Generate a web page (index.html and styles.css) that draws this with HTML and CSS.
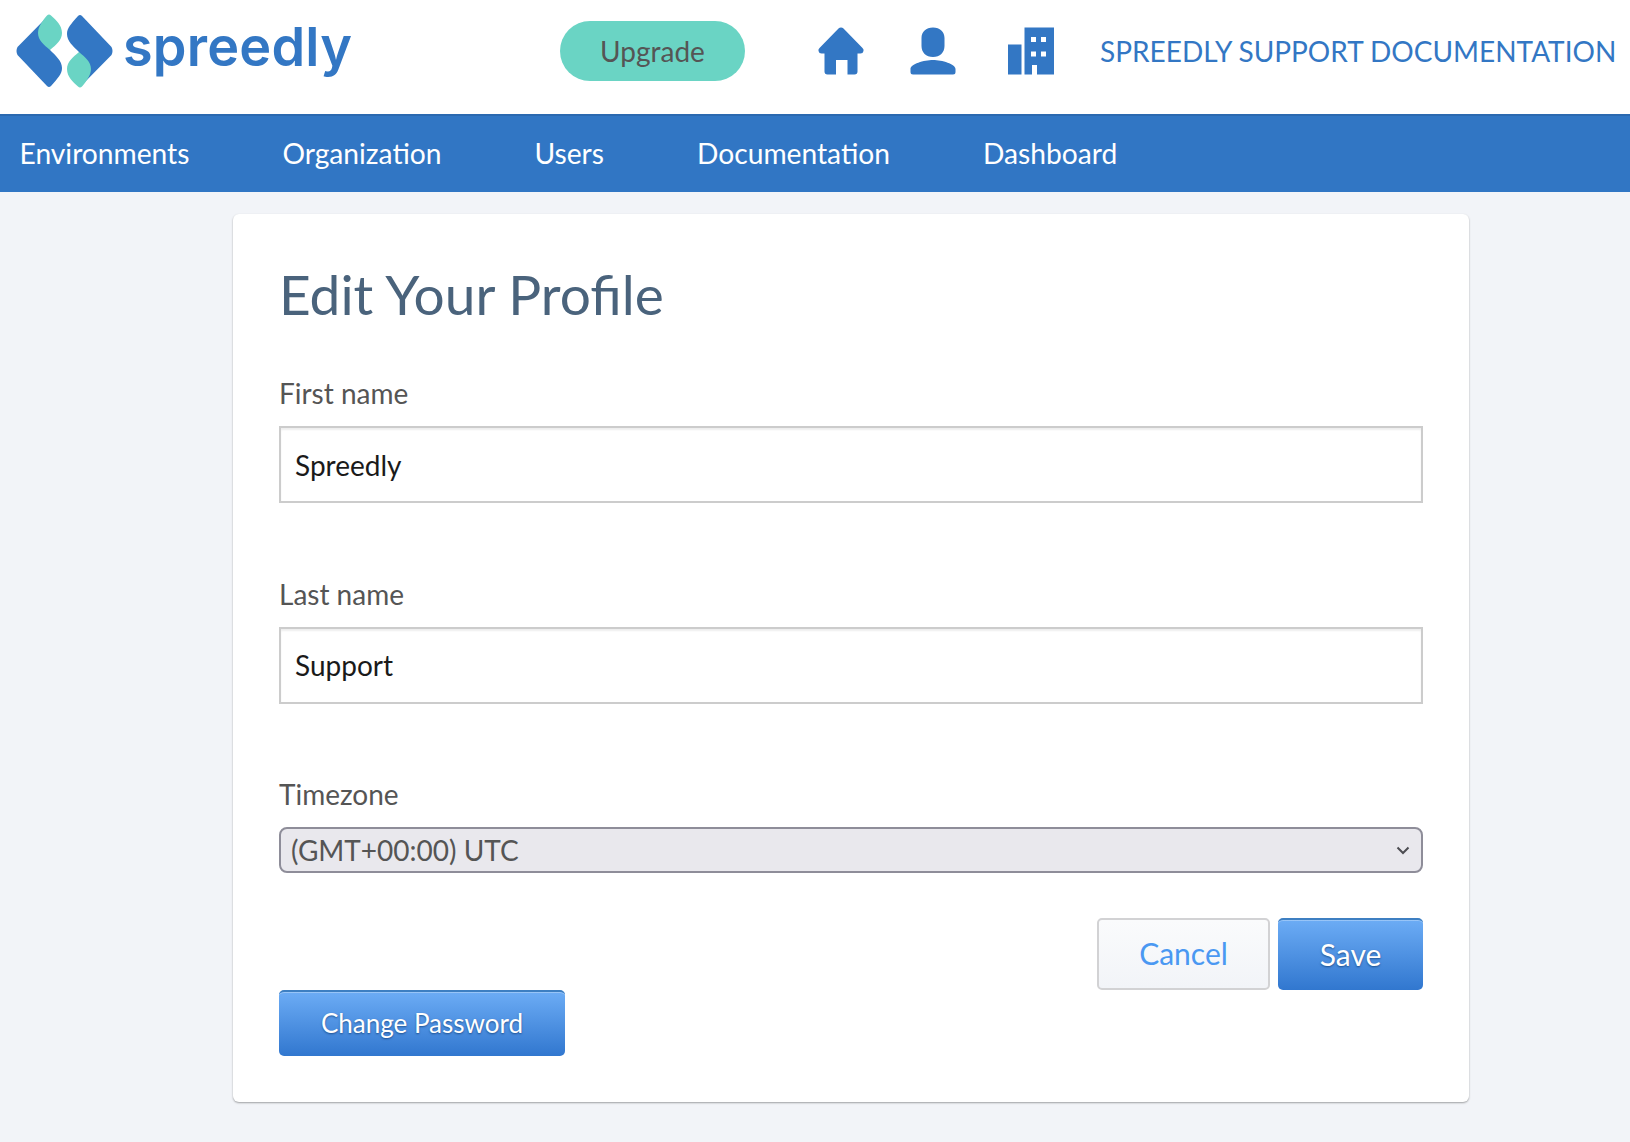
FILE: index.html
```html
<!DOCTYPE html>
<html lang="en">
<head>
<meta charset="utf-8">
<title>Edit Your Profile</title>
<link rel="stylesheet" href="styles.css">
</head>
<body>
<header class="topbar">
  <a class="brand" href="#">
    <svg class="brand-mark" viewBox="0 0 97 74" width="97" height="74" aria-hidden="true">
      <g id="half">
        <path fill="#3377c4" d="M33 1 L1.500 33 Q-.5 37 1.500 41 L31 72 Q33 73.800 35 72 C42 64 46 60 46 54 C46 47 40 42 34 36 Z"/>
        <path fill="#6ad4c4" d="M33 .5 Q34 .5 35 1.500 C40 6 46 11 46 19 C46 26 40 31 34 36 C28 31 22 26 22 19 C22 13 27 6 31 1.500 Q32 .5 33 .5 Z"/>
      </g>
      <use href="#half" transform="rotate(180 48.500 37)"/>
    </svg>
    <span class="brand-name">spreedly</span>
  </a>
  <a class="upgrade" href="#">Upgrade</a>
  <div class="top-icons">
    <a href="#" aria-label="Home"><svg viewBox="0 0 48 48" width="48" height="48"><path fill="#3377c4" d="M24 .5 Q25.500 .5 26.500 1.500 L45.500 21 Q47 22.500 46.500 24 Q46 26.500 43.500 26.500 L40.500 26.500 L40.500 44.500 Q40.500 47.500 37.500 47.500 L30.500 47.500 L30.500 33 L19 33 L19 47.500 L10.500 47.500 Q7.500 47.500 7.500 44.500 L7.500 26.500 L4.500 26.500 Q2 26.500 1.500 24 Q1 22.500 2.500 21 L21.500 1.500 Q22.500 .5 24 .5 Z"/></svg></a>
    <a href="#" aria-label="Profile"><svg viewBox="0 0 48 48" width="48" height="48"><path fill="#3377c4" d="M24 .5 C31 .5 35.500 5 35.500 11 L35.500 19 C35.500 25.500 31 30 24 30 C17 30 12.500 25.500 12.500 19 L12.500 11 C12.500 5 17 .5 24 .5 Z M24 33 C33 33 46.500 37 46.500 42 L46.500 45 Q46.500 47.500 44 47.500 L4 47.500 Q1.500 47.500 1.500 45 L1.500 42 C1.500 37 15 33 24 33 Z"/></svg></a>
    <a class="icon-org" href="#" aria-label="Organization"><svg viewBox="0 0 48 48" width="48" height="48"><path fill="#3377c4" fill-rule="evenodd" d="M1 17.500 L14.500 17.500 L14.500 47.500 L1 47.500 Z M19.500 .5 L47 .5 L47 47.500 L30 47.500 L30 38 L25 38 L25 47.500 L17.500 47.500 L17.500 .5 Z M24 10 L24 15 L29 15 L29 10 Z M34 10 L34 15 L39 15 L39 10 Z M24 24.500 L24 29.500 L29 29.500 L29 24.500 Z M34 24.500 L34 29.500 L39 29.500 L39 24.500 Z"/></svg></a>
  </div>
  <a class="docs-link" href="#">SPREEDLY SUPPORT DOCUMENTATION</a>
</header>

<nav class="mainnav">
  <a href="#">Environments</a>
  <a href="#">Organization</a>
  <a href="#">Users</a>
  <a href="#">Documentation</a>
  <a href="#">Dashboard</a>
</nav>

<main class="card">
  <h1>Edit Your Profile</h1>
  <form>
    <div class="field">
      <label for="first">First name</label>
      <input id="first" type="text" value="Spreedly">
    </div>
    <div class="field">
      <label for="last">Last name</label>
      <input id="last" type="text" value="Support">
    </div>
    <div class="field field-select">
      <label for="tz">Timezone</label>
      <div class="select">
        <span id="tz">(GMT+00:00) UTC</span>
        <svg viewBox="0 0 14 9" width="14" height="9" aria-hidden="true"><path d="M1.500 1.500 L7 7 L12.500 1.500" fill="none" stroke="#4d4d52" stroke-width="2"/></svg>
      </div>
    </div>
    <div class="actions">
      <button class="btn btn-light" type="button">Cancel</button>
      <button class="btn btn-primary btn-save" type="button">Save</button>
    </div>
    <button class="btn btn-primary btn-password" type="button">Change Password</button>
  </form>
</main>
</body>
</html>
```
FILE: styles.css
```css
* { box-sizing: border-box; }
html, body { margin: 0; padding: 0; }
body {
  background: #f2f4f8;
  font-family: Lato, "Liberation Sans", sans-serif;
  color: #555;
  height: 1142px;
  overflow: hidden;
}
a { text-decoration: none; color: inherit; }

.topbar {
  height: 114px;
  background: #fff;
  display: flex;
  align-items: flex-start;
  padding-left: 16px;
}
.brand {
  display: flex;
  align-items: flex-start;
  width: 544px;
  padding-top: 14px;
}
.brand-mark { flex: none; }
.brand-name {
  margin-left: 10px;
  margin-top: -5px;
  font-family: Inter, sans-serif;
  font-weight: 600;
  font-size: 54px;
  line-height: 76px;
  letter-spacing: 0.2px;
  color: #3377c4;
}
.upgrade {
  width: 185px;
  height: 60px;
  margin-top: 21px;
  border-radius: 30px;
  background: #6ad4c4;
  display: flex;
  align-items: center;
  justify-content: center;
  font-size: 28px;
  color: #555;
}
.top-icons {
  display: flex;
  gap: 44px;
  margin-left: 72px;
  margin-top: 27px;
}
.top-icons a { display: block; height: 48px; }
.top-icons .icon-org { margin-left: 6px; }
.top-icons svg { display: block; }
.docs-link {
  margin-left: 45px;
  margin-top: 32px;
  font-size: 28px;
  line-height: 38px;
  color: #3377c4;
  white-space: nowrap;
}

.mainnav {
  height: 78px;
  background: #3176c4;
  box-shadow: inset 0 2px 0 #2b69b0;
  display: flex;
  align-items: center;
  gap: 93px;
  padding-left: 19.500px;
  font-size: 28.200px;
  color: #fff;
}

.card {
  width: 1236px;
  height: 888px;
  margin: 22px 0 0 233px;
  background: #fff;
  border-radius: 6px;
  box-shadow: 0 1px 2px rgba(0,0,0,.35);
  padding: 47px 46px 0;
}
h1 {
  margin: 0;
  font-size: 55px;
  line-height: 66px;
  font-weight: 400;
  color: #4a637c;
}
label {
  display: block;
  font-size: 28px;
  line-height: 34px;
  color: #555;
}
form { margin-top: 49px; }
.field { height: 200.500px; }
.field label { margin-bottom: 16px; }
.field input {
  display: block;
  width: 100%;
  height: 77px;
  border: 2px solid #ccc;
  border-radius: 0;
  box-shadow: inset 0 2px 2px #eee;
  background: #fff;
  padding: 0 14px;
  font-family: inherit;
  font-size: 28px;
  color: #1a1a1a;
  outline: none;
}
.field-select { height: 141px; }
.select {
  height: 46px;
  border: 2px solid #8e8d99;
  border-radius: 8px;
  background: #e9e8ed;
  display: flex;
  align-items: center;
  justify-content: space-between;
  padding: 0 11px 0 10px;
  font-size: 28px;
  color: #555;
}
.actions {
  display: flex;
  justify-content: flex-end;
  gap: 8px;
}
.btn {
  font-family: inherit;
  border-radius: 5px;
  cursor: pointer;
  padding: 0 0 3px;
}
.btn-light {
  width: 173px;
  height: 72px;
  border: 2px solid #d2d2d4;
  background: linear-gradient(#fafbfc, #f2f4f8);
  color: #4a98f2;
  font-size: 30px;
}
.btn-primary {
  border: 0;
  border-top: 2px solid #3d7fc2;
  background: linear-gradient(#6cacf5, #3177cf);
  box-shadow: inset 0 1px 0 rgba(255,255,255,.3);
  color: #fff;
  text-shadow: 0 1px 2px rgba(0,40,90,.6);
}
.btn-save {
  width: 145px;
  height: 72px;
  font-size: 30px;
}
.btn-password {
  display: block;
  width: 286px;
  height: 66px;
  font-size: 26px;
}
```
